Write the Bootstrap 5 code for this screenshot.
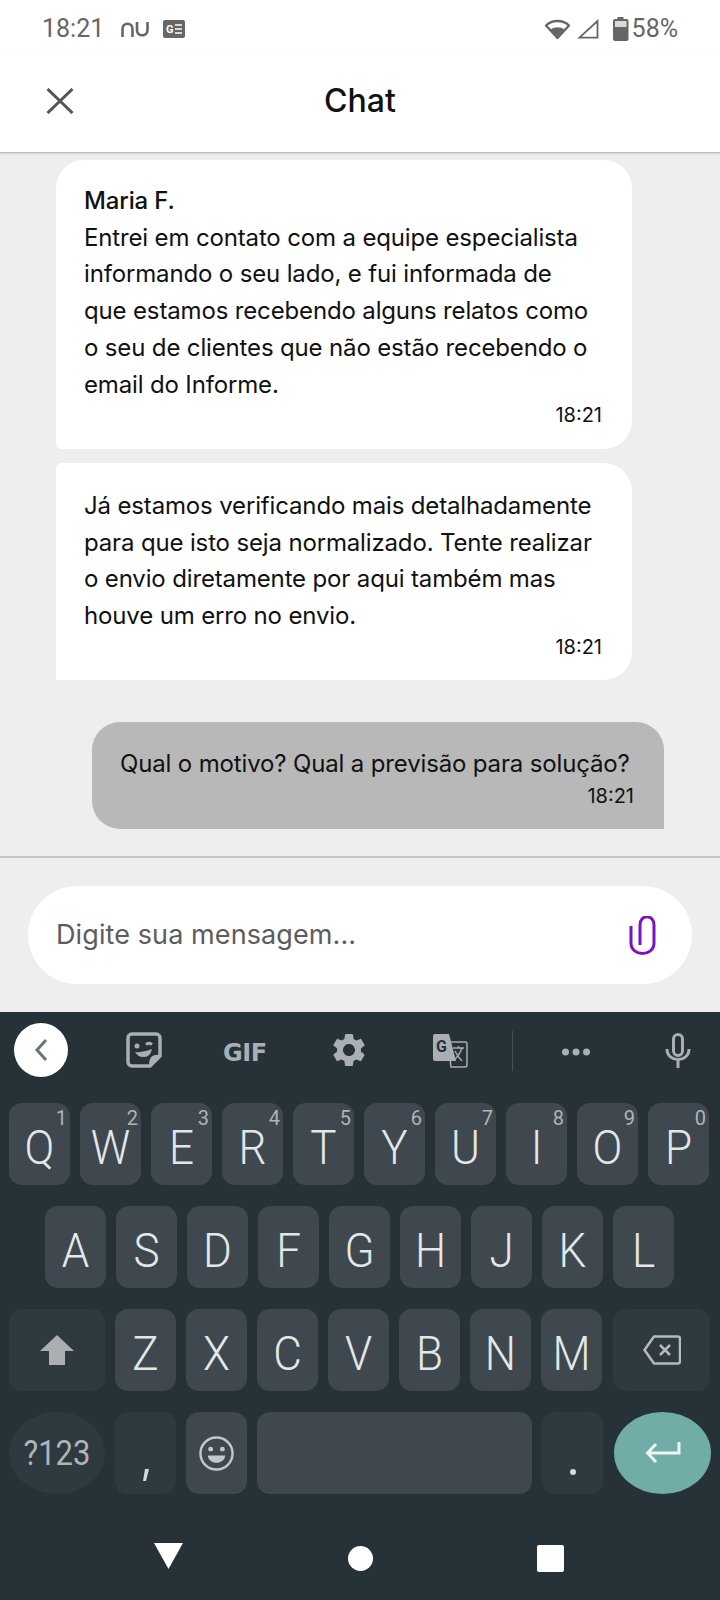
<!DOCTYPE html>
<html lang="pt-BR">

<head>
  <meta charset="UTF-8">
  <meta name="viewport" content="width=device-width, initial-scale=1">
  <title>Chat</title>
  <link href="https://cdn.jsdelivr.net/npm/bootstrap@5.3.0/dist/css/bootstrap.min.css" rel="stylesheet">
  <style>
    body {
      width: 720px;
      height: 1600px;
      margin: 0;
      overflow: hidden;
      background-color: #eeeeee;
      font-family: Inter, "Liberation Sans", sans-serif;
      color: #111;
    }

    .statusbar {
      height: 50px;
      padding: 8px 42px 0 42px;
      background-color: #fff;
      color: #666;
      font-family: Roboto, sans-serif;
      font-size: 25px;
    }

    .st-nu { margin-left: 17px; }
    .st-ge { margin-left: 14px; }
    .st-sinal { margin-left: 6px; }
    .st-bat { margin-left: 14px; }
    .st-pct { margin-left: 3px; }

    .topbar {
      height: 103px;
      background-color: #fff;
      border-bottom: 1px solid #bdbdbd;
      box-shadow: 0 1px 2px rgba(0, 0, 0, .12);
      padding-left: 46px;
    }

    .topbar-title {
      font-size: 32px;
      font-weight: 500;
      color: #111;
      line-height: 1;
    }

    .chat-area {
      height: 705px;
      padding-top: 7px;
      border-bottom: 2px solid #c4c4c4;
      font-size: 24px;
      line-height: 36.7px;
      font-weight: 400;
      letter-spacing: -.15px;
    }

    .bolha {
      padding: 23px 29px 20px 28px;
    }

    .bolha-a {
      width: 576px;
      margin-left: 56px;
      background-color: #fff;
    }

    .bolha-1 {
      height: 289px;
      border-radius: 28px 28px 28px 5px;
    }

    .bolha-2 {
      height: 217px;
      margin-top: 14px;
      padding-top: 25px;
      border-radius: 6px 28px 28px 0;
    }

    .bolha-eu {
      width: 572px;
      height: 107px;
      margin: 42px 0 0 92px;
      padding-top: 24px;
      background-color: #b8b8b8;
      border-radius: 28px 28px 0 28px;
    }

    .bolha-eu .hora {
      margin-top: 1px;
    }

    .nome {
      font-weight: 500;
    }

    .hora {
      font-size: 20px;
      line-height: 24px;
      text-align: right;
      margin-right: 1px;
      letter-spacing: 0;
    }

    .input-area {
      height: 154px;
      padding: 28px 28px 0;
    }

    .input-pill {
      height: 98px;
      border-radius: 49px;
      background-color: #fff;
      padding: 0 36px 0 28px;
      font-size: 27px;
      letter-spacing: .1px;
      color: #5c5c5c;
    }

    .kb {
      height: 588px;
      background-color: #263238;
      color: #e4e7e8;
      font-family: Roboto, sans-serif;
    }

    .kb-tools {
      height: 91px;
      padding: 11px 0 0 14px;
    }

    .kb-back {
      width: 54px;
      height: 54px;
      border-radius: 50%;
      background-color: #fff;
    }

    .gif-txt {
      font-family: "DejaVu Sans", sans-serif;
      font-weight: 700;
      font-size: 24px;
      color: #a9afb3;
      letter-spacing: -.5px;
      line-height: 1;
      margin: 18px 0 0 61px;
    }

    .ic-figura { margin: 9px 0 0 58px; }
    .ic-gear { margin: 7px 0 0 62px; }
    .ic-trad { margin: 11px 0 0 64px; }
    .ic-pontos { margin: 24px 0 0 48px; }
    .ic-mic { margin: 10px 0 0 74px; }

    .kb-sep {
      width: 1px;
      height: 40px;
      margin: 8px 0 0 44px;
      background-color: #465159;
    }

    .kb-rows {
      padding-left: 9px;
      row-gap: 21px;
    }

    .kb-row {
      height: 82px;
      column-gap: 10px;
    }

    .kb-recuo {
      padding-left: 36px;
    }

    .tecla {
      width: 61px;
      height: 82px;
      border-radius: 13px;
      background-color: #3f484f;
      font-size: 44px;
      font-weight: 300;
      line-height: 1;
    }

    .letra {
      display: inline-block;
      padding-top: 5px;
      transform: scaleY(1.09);
    }

    .tecla-esc {
      background-color: #2e3940;
    }

    .tecla-larga {
      width: 97px;
    }

    .tecla-menor {
      width: 96px;
    }

    .tecla-dir {
      margin-left: 1px;
    }

    .tecla-redonda {
      border-radius: 50%;
    }

    .tecla-espaco {
      width: 275px;
    }

    .tecla-enter {
      background-color: #6fada6;
    }

    .tecla-num {
      position: absolute;
      top: 5px;
      right: 3px;
      font-size: 20px;
      font-weight: 400;
      color: #aeb4b7;
    }

    .txt-123 {
      display: inline-block;
      font-size: 31px;
      font-weight: 400;
      color: #aeb4b7;
      transform: scaleY(1.14);
    }

    .virgula { margin-bottom: 5px; }
    .ponto { margin-bottom: 11px; }

    .nav-tri { margin: 49px 0 0 154px; }
    .nav-bola { margin: 52px 0 0 165px; }
    .nav-quad { margin: 51px 0 0 164px; }
  </style>
</head>

<body>

  <!-- barra de status -->
  <div class="statusbar d-flex align-items-center">
    <span>18:21</span>
    <svg class="st-nu" width="28" height="15" viewBox="0 0 28 15" fill="none" stroke="#666" stroke-width="2.600">
      <path d="M1.500 15V7c0-7 10-7 10 0v8" />
      <path d="M16 0v8c0 7 10.500 7 10.500 0V0" />
    </svg>
    <svg class="st-ge" width="22" height="18" viewBox="0 0 22 18">
      <rect width="22" height="18" rx="2" fill="#666" />
      <text x="3" y="13" font-size="11" font-weight="700" fill="#fff" font-family="Roboto, sans-serif">G</text>
      <path d="M12 5h7M12 9h7M12 13h7" stroke="#fff" stroke-width="1.6" />
    </svg>
    <div class="ms-auto d-flex align-items-center">
      <svg width="27" height="22" viewBox="0 0 27 22" fill="none">
        <path d="M13.5 20 2 7.5C8 1.5 19 1.5 25 7.5Z" stroke="#666" stroke-width="2.4" stroke-linejoin="round" />
        <path d="M13.5 20 6.5 11.5c4-3 10-3 14 0Z" fill="#666" />
      </svg>
      <svg class="st-sinal" width="22" height="20" viewBox="0 0 22 20" fill="none">
        <path d="M20.5 2v16.7H2.500Z" stroke="#666" stroke-width="1.8" />
      </svg>
      <svg class="st-bat" width="16" height="24" viewBox="0 0 16 24">
        <path d="M4.500 0h6v2h3a2 2 0 0 1 2 2v18a2 2 0 0 1-2 2H2a2 2 0 0 1-2-2V4a2 2 0 0 1 2-2h2.500Z" fill="#666" />
        <rect x="2" y="4" width="11.500" height="6" fill="#d9d9d9" />
      </svg>
      <span class="st-pct">58%</span>
    </div>
  </div>

  <!-- topo -->
  <div class="topbar d-flex align-items-center position-relative">
    <svg width="28" height="26" viewBox="0 0 28 26" fill="none" stroke="#555" stroke-width="3">
      <path d="M1.500 1 26.500 25M26.500 1 1.500 25" />
    </svg>
    <div class="topbar-title position-absolute start-50 translate-middle-x">Chat</div>
  </div>

  <!-- mensagens -->
  <div class="chat-area">
    <div class="bolha bolha-a bolha-1">
      <div class="nome">Maria F.</div>
      <div>Entrei em contato com a equipe especialista<br>informando o seu lado, e fui informada de<br>que estamos recebendo alguns relatos como<br>o seu de clientes que não estão recebendo o<br>email do Informe.</div>
      <div class="hora">18:21</div>
    </div>
    <div class="bolha bolha-a bolha-2">
      <div>Já estamos verificando mais detalhadamente<br>para que isto seja normalizado. Tente realizar<br>o envio diretamente por aqui também mas<br>houve um erro no envio.</div>
      <div class="hora">18:21</div>
    </div>
    <div class="bolha bolha-eu">
      <div>Qual o motivo? Qual a previsão para solução?</div>
      <div class="hora">18:21</div>
    </div>
  </div>

  <!-- campo de mensagem -->
  <div class="input-area">
    <div class="input-pill d-flex align-items-center justify-content-between">
      <span>Digite sua mensagem...</span>
      <svg width="27" height="39" viewBox="0 0 27 39" fill="none" stroke="#7a12c4" stroke-width="3">
        <path d="M2 10v17c0 14 23 14 23 0V9C25-2 11-2 11 9v20" />
      </svg>
    </div>
  </div>

  <!-- teclado -->
  <div class="kb">
    <div class="kb-tools d-flex align-items-start">
      <div class="kb-back d-flex align-items-center justify-content-center">
        <svg width="14" height="24" viewBox="0 0 14 24" fill="none" stroke="#6b757b" stroke-width="3">
          <path d="M12 2 3 12l9 10" />
        </svg>
      </div>
      <svg class="ic-figura" width="36" height="36" viewBox="0 0 36 36" fill="none">
        <path d="M6 2h24a4 4 0 0 1 4 4v18L24 34H6a4 4 0 0 1-4-4V6a4 4 0 0 1 4-4Z" stroke="#a9afb3" stroke-width="3.500" stroke-linejoin="round" />
        <path d="M34 23c-8-1-11 2-11 11Z" fill="#a9afb3" />
        <circle cx="11" cy="14" r="2.500" fill="#a9afb3" />
        <path d="M20 12.500q3-2.500 6 0" stroke="#a9afb3" stroke-width="3" />
        <path d="M9 20q8 1 17-3-2 9-9 8-5 0-8-5Z" fill="#a9afb3" />
      </svg>
      <div class="gif-txt">GIF</div>
      <svg class="ic-gear" width="40" height="40" viewBox="0 0 24 24" fill="#a9afb3">
        <path d="M19.14 12.94c.04-.3.06-.61.06-.94 0-.32-.02-.64-.07-.94l2.030-1.580c.18-.14.23-.41.12-.61l-1.920-3.320c-.12-.22-.37-.29-.59-.22l-2.390.96c-.5-.38-1.030-.7-1.620-.94l-.36-2.540c-.04-.24-.24-.41-.48-.41h-3.840c-.24 0-.43.17-.47.41l-.36 2.540c-.59.24-1.130.57-1.620.94l-2.390-.96c-.22-.08-.47 0-.59.22L2.740 8.870c-.12.21-.08.47.12.61l2.030 1.580c-.05.3-.09.63-.09.94s.02.64.07.94l-2.030 1.580c-.18.14-.23.41-.12.61l1.920 3.320c.12.22.37.29.59.22l2.390-.96c.5.38 1.030.7 1.620.94l.36 2.540c.05.24.24.41.48.41h3.840c.24 0 .44-.17.47-.41l.36-2.540c.59-.24 1.130-.56 1.620-.94l2.390.96c.22.08.47 0 .59-.22l1.920-3.320c.12-.22.07-.47-.12-.61l-2.010-1.580zM12 15.600c-1.980 0-3.600-1.620-3.600-3.600s1.620-3.600 3.600-3.600 3.600 1.620 3.600 3.600-1.620 3.600-3.600 3.600z" />
      </svg>
      <svg class="ic-trad" width="35" height="34" viewBox="0 0 35 34">
        <path d="M15 8h17a2 2 0 0 1 2 2v21a2 2 0 0 1-2 2H18Z" fill="#263238" stroke="#a9afb3" stroke-width="1.500" />
        <path d="M2 0h14l7 27H2a2 2 0 0 1-2-2V2a2 2 0 0 1 2-2Z" fill="#a9afb3" />
        <text x="3" y="18" font-size="16" font-weight="700" fill="#263238" font-family="Roboto, sans-serif">G</text>
        <path d="M20 14h11M25.500 12v2M29 14q-3 8-8 12M22 17q3 6 7 10" fill="none" stroke="#a9afb3" stroke-width="1.400" />
      </svg>
      <div class="kb-sep"></div>
      <svg class="ic-pontos" width="30" height="10" viewBox="0 0 30 10" fill="#a9afb3">
        <circle cx="4.500" cy="5" r="3.500" />
        <circle cx="15" cy="5" r="3.500" />
        <circle cx="25.500" cy="5" r="3.500" />
      </svg>
      <svg class="ic-mic" width="26" height="35" viewBox="0 0 26 35" fill="none" stroke="#a9afb3" stroke-width="3">
        <rect x="8.500" y="1.500" width="9" height="21" rx="4.500" />
        <path d="M2 16c0 14 22 14 22 0M13 26v9" />
      </svg>
    </div>

    <div class="kb-rows d-flex flex-column">
      <div class="kb-row d-flex">
        <div class="tecla position-relative d-flex align-items-center justify-content-center"><span class="letra">Q</span><span class="tecla-num">1</span></div>
        <div class="tecla position-relative d-flex align-items-center justify-content-center"><span class="letra">W</span><span class="tecla-num">2</span></div>
        <div class="tecla position-relative d-flex align-items-center justify-content-center"><span class="letra">E</span><span class="tecla-num">3</span></div>
        <div class="tecla position-relative d-flex align-items-center justify-content-center"><span class="letra">R</span><span class="tecla-num">4</span></div>
        <div class="tecla position-relative d-flex align-items-center justify-content-center"><span class="letra">T</span><span class="tecla-num">5</span></div>
        <div class="tecla position-relative d-flex align-items-center justify-content-center"><span class="letra">Y</span><span class="tecla-num">6</span></div>
        <div class="tecla position-relative d-flex align-items-center justify-content-center"><span class="letra">U</span><span class="tecla-num">7</span></div>
        <div class="tecla position-relative d-flex align-items-center justify-content-center"><span class="letra">I</span><span class="tecla-num">8</span></div>
        <div class="tecla position-relative d-flex align-items-center justify-content-center"><span class="letra">O</span><span class="tecla-num">9</span></div>
        <div class="tecla position-relative d-flex align-items-center justify-content-center"><span class="letra">P</span><span class="tecla-num">0</span></div>
      </div>
      <div class="kb-row kb-recuo d-flex">
        <div class="tecla d-flex align-items-center justify-content-center"><span class="letra">A</span></div>
        <div class="tecla d-flex align-items-center justify-content-center"><span class="letra">S</span></div>
        <div class="tecla d-flex align-items-center justify-content-center"><span class="letra">D</span></div>
        <div class="tecla d-flex align-items-center justify-content-center"><span class="letra">F</span></div>
        <div class="tecla d-flex align-items-center justify-content-center"><span class="letra">G</span></div>
        <div class="tecla d-flex align-items-center justify-content-center"><span class="letra">H</span></div>
        <div class="tecla d-flex align-items-center justify-content-center"><span class="letra">J</span></div>
        <div class="tecla d-flex align-items-center justify-content-center"><span class="letra">K</span></div>
        <div class="tecla d-flex align-items-center justify-content-center"><span class="letra">L</span></div>
      </div>
      <div class="kb-row d-flex">
        <div class="tecla tecla-esc tecla-menor d-flex align-items-center justify-content-center">
          <svg width="34" height="30" viewBox="0 0 34 30" fill="#a9afb3">
            <path d="M17 0 34 16H25V30H9V16H0Z" />
          </svg>
        </div>
        <div class="tecla d-flex align-items-center justify-content-center"><span class="letra">Z</span></div>
        <div class="tecla d-flex align-items-center justify-content-center"><span class="letra">X</span></div>
        <div class="tecla d-flex align-items-center justify-content-center"><span class="letra">C</span></div>
        <div class="tecla d-flex align-items-center justify-content-center"><span class="letra">V</span></div>
        <div class="tecla d-flex align-items-center justify-content-center"><span class="letra">B</span></div>
        <div class="tecla d-flex align-items-center justify-content-center"><span class="letra">N</span></div>
        <div class="tecla d-flex align-items-center justify-content-center"><span class="letra">M</span></div>
        <div class="tecla tecla-esc tecla-larga tecla-dir d-flex align-items-center justify-content-center">
          <svg width="38" height="30" viewBox="0 0 38 30" fill="none" stroke="#b5babd" stroke-width="2.500">
            <path d="M11 1.500h24a2 2 0 0 1 2 2v23a2 2 0 0 1-2 2H11L1.500 15Z" stroke-linejoin="round" />
            <path d="M17 10l10 10M27 10 17 20" />
          </svg>
        </div>
      </div>
      <div class="kb-row d-flex">
        <div class="tecla tecla-esc tecla-menor tecla-redonda d-flex align-items-center justify-content-center"><span class="txt-123">?123</span></div>
        <div class="tecla tecla-esc d-flex justify-content-center align-items-end pb-2">
          <svg class="virgula" width="8" height="12" viewBox="0 0 8 12">
            <path d="M3 0h4L4 12H1Z" fill="#d5d8da" />
          </svg>
        </div>
        <div class="tecla d-flex align-items-center justify-content-center">
          <svg width="35" height="35" viewBox="0 0 36 36" fill="none">
            <circle cx="18" cy="18" r="16.500" stroke="#c3c7c9" stroke-width="2.500" />
            <circle cx="12" cy="13.500" r="2.500" fill="#c3c7c9" />
            <circle cx="24" cy="13.500" r="2.500" fill="#c3c7c9" />
            <path d="M9 20h18c-1 10-17 10-18 0Z" fill="#c3c7c9" />
          </svg>
        </div>
        <div class="tecla tecla-espaco"></div>
        <div class="tecla tecla-esc d-flex justify-content-center align-items-end pb-2">
          <svg class="ponto" width="6" height="6" viewBox="0 0 6 6">
            <circle cx="3" cy="3" r="3" fill="#d5d8da" />
          </svg>
        </div>
        <div class="tecla tecla-enter tecla-larga tecla-dir tecla-redonda d-flex align-items-center justify-content-center">
          <svg width="36" height="22" viewBox="0 0 36 22" fill="none" stroke="#eef5f4" stroke-width="3">
            <path d="M34 0v11H3M11 2 2.500 11l8.500 9" />
          </svg>
        </div>
      </div>
    </div>

    <div class="d-flex align-items-start">
      <svg class="nav-tri" width="29" height="26" viewBox="0 0 29 26">
        <path d="M0 0h29L14.500 26Z" fill="#fff" />
      </svg>
      <svg class="nav-bola" width="25" height="25" viewBox="0 0 25 25">
        <circle cx="12.500" cy="12.500" r="12.500" fill="#fff" />
      </svg>
      <svg class="nav-quad" width="27" height="27" viewBox="0 0 27 27">
        <rect width="27" height="27" rx="2" fill="#fff" />
      </svg>
    </div>
  </div>

  <script src="https://cdn.jsdelivr.net/npm/bootstrap@5.3.0/dist/js/bootstrap.bundle.min.js"></script>
</body>

</html>
